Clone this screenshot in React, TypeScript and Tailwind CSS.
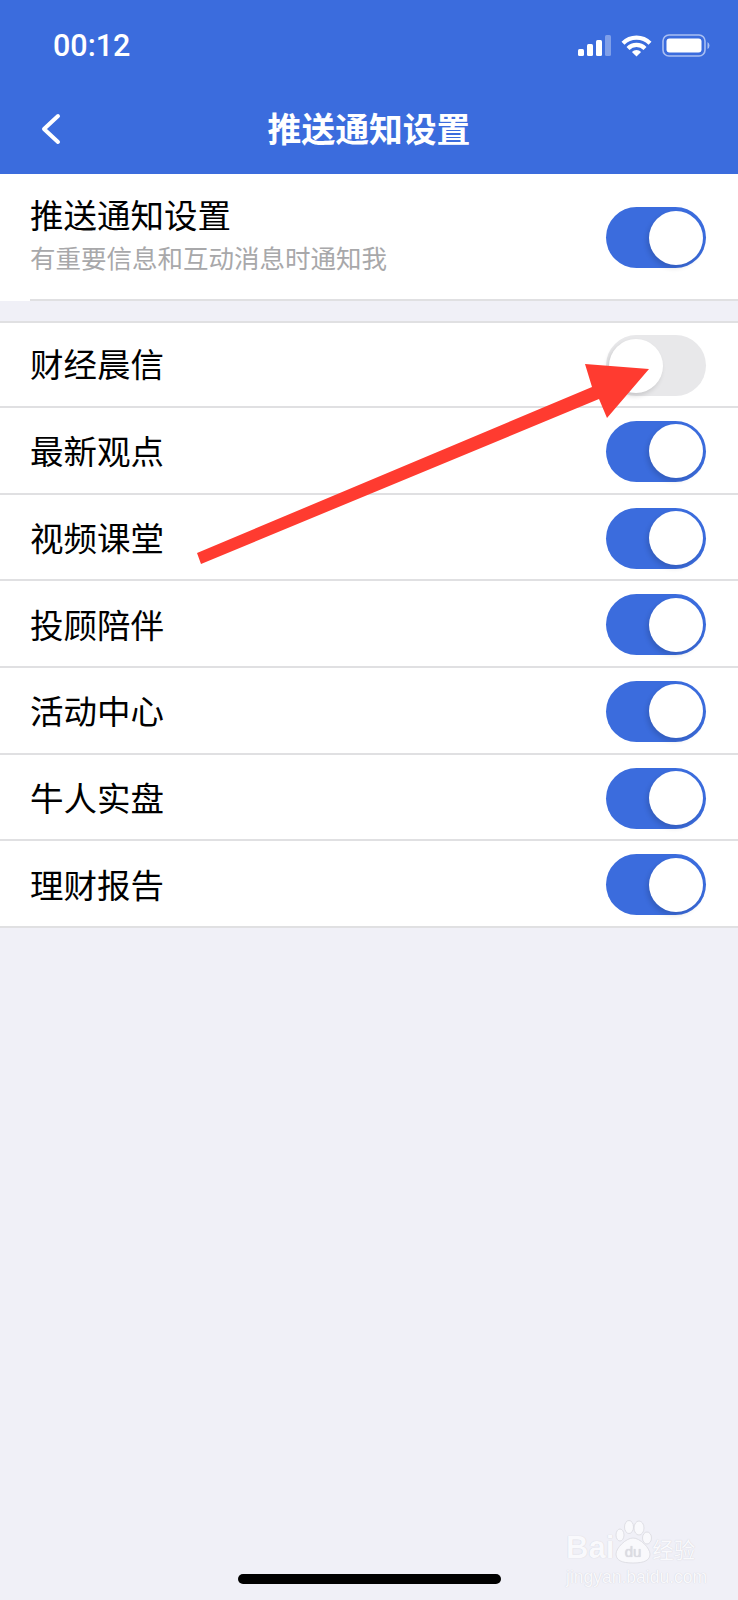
const cjk = "font-['Noto_Sans_CJK_SC','Noto_Sans',sans-serif]";

const rows = [
  { label: "财经晨信", on: false },
  { label: "最新观点", on: true },
  { label: "视频课堂", on: true },
  { label: "投顾陪伴", on: true },
  { label: "活动中心", on: true },
  { label: "牛人实盘", on: true },
  { label: "理财报告", on: true },
];

function Toggle({ on }: { on: boolean }) {
  return (
    <div
      className={`flex h-[61px] w-[100px] shrink-0 items-center rounded-full px-[3px] ${
        on ? "justify-end bg-[#3b6cdd]" : "justify-start bg-[#e8e8ea]"
      }`}
    >
      <div className="h-[54px] w-[54px] rounded-full bg-white shadow-[-2px_3px_5px_rgba(0,0,0,0.14)]" />
    </div>
  );
}

function StatusIcons() {
  return (
    <div className="flex items-center">
      <svg width="36" height="22" viewBox="0 0 36 22" fill="#fff">
        <rect x="2" y="14" width="6" height="7" rx="1.5" />
        <rect x="11" y="9" width="6" height="12" rx="1.5" />
        <rect x="20" y="5" width="6" height="16" rx="1.5" />
        <rect x="29" y="0" width="6" height="21" rx="1.5" fill="#7f9fe9" />
      </svg>
      <svg className="ml-[9px]" width="31" height="22" viewBox="0 0 31 22" fill="none" stroke="#fff" strokeWidth="4.2">
        <path d="M2 8.2a19 19 0 0 1 27 0" />
        <path d="M7 13.4a12 12 0 0 1 17 0" />
        <path d="M15.5 21.5l-4.6-4.6a6.5 6.5 0 0 1 9.2 0z" fill="#fff" stroke="none" />
      </svg>
      <svg className="ml-[10px]" width="48" height="23" viewBox="0 0 48 23" fill="none">
        <rect x="1" y="1" width="42" height="21" rx="6" stroke="#a9bff2" strokeWidth="1.6" />
        <rect x="4.5" y="4.5" width="35" height="14" rx="3" fill="#fff" />
        <path d="M45.5 8v7a4 4 0 0 0 2-3.5 4 4 0 0 0-2-3.5z" fill="#a9bff2" />
      </svg>
    </div>
  );
}

function Watermark() {
  return (
    <div className="absolute left-[566px] top-[1520px] w-[135px] text-[#f9f9fc] [text-shadow:0_0_1px_#c9c9d2]">
      <div className="flex h-[44px] items-end">
        <span className="font-['Liberation_Sans',sans-serif] text-[31px] font-bold leading-[32px]">Bai</span>
        <svg className="shrink-0" width="38" height="44" viewBox="0 0 38 44" fill="#f9f9fc" stroke="#d9d9e0" strokeWidth="0.8">
          <ellipse cx="6" cy="15" rx="4" ry="6" />
          <ellipse cx="15" cy="7" rx="4.5" ry="6.5" />
          <ellipse cx="25" cy="8" rx="5" ry="7" />
          <ellipse cx="33" cy="18" rx="4.5" ry="6" />
          <path d="M19 18c7 0 17 10 17 16 0 6-5 9-17 9S2 40 2 34c0-6 10-16 17-16z" />
          <text x="19" y="37" textAnchor="middle" fontSize="15" fontFamily="Liberation Sans" fill="#dcdce3" stroke="none">
            du
          </text>
        </svg>
        <span className={`${cjk} text-[21.5px] leading-[30px]`}>经验</span>
      </div>
      <div className="mt-[3px] font-['Liberation_Sans',sans-serif] text-[17.5px] leading-[20px]">jingyan.baidu.com</div>
    </div>
  );
}

export default function App() {
  return (
    <div className={`relative h-[1600px] w-[738px] overflow-hidden bg-[#f0f0f7] ${cjk}`}>
      <header className="h-[174px] bg-[#3b6cdd] text-white">
        <div className="flex h-[92px] items-start justify-between pl-[53px] pr-[28px] pt-[34px]">
          <span className="font-['Roboto',sans-serif] text-[30.5px] font-medium leading-[24px]">00:12</span>
          <StatusIcons />
        </div>
        <div className="relative flex h-[76px] items-center justify-center pb-[4px]">
          <svg className="absolute left-[40px] top-[21px]" width="22" height="32" viewBox="0 0 22 32" fill="none" stroke="#fff" strokeWidth="4" strokeLinecap="round" strokeLinejoin="round">
            <path d="M18 3 4 16l14 13" />
          </svg>
          <h1 className="text-[33.8px] font-bold leading-[40px]">推送通知设置</h1>
        </div>
      </header>

      <section className="h-[127px] bg-white pl-[30px]">
        <div className="flex h-full items-start justify-between border-b-2 border-[#e0e0e2] pr-[32px]">
          <div className="pt-[18px]">
            <div className="text-[33.5px] leading-[44px] text-black">推送通知设置</div>
            <div className="mt-[4px] text-[25.5px] leading-[34px] text-[#a8a8aa]">有重要信息和互动消息时通知我</div>
          </div>
          <div className="pt-[33px]">
            <Toggle on />
          </div>
        </div>
      </section>

      <section className="mt-[20px] border-t-2 border-[#e0e0e2] bg-white">
        {rows.map((row, i) => (
          <div
            key={row.label}
            className="flex h-[86.7px] items-center justify-between border-b-2 border-[#e0e0e2] pl-[30px] pr-[32px] first:h-[85px]"
          >
            <span className={`text-[33.5px] leading-[44px] text-black ${i === 0 ? "-mt-[4px]" : ""}`}>{row.label}</span>
            <div className="mt-[2px]">
              <Toggle on={row.on} />
            </div>
          </div>
        ))}
      </section>

      {/* red annotation arrow drawn over the list */}
      <svg className="absolute left-0 top-0" width="738" height="600" viewBox="0 0 738 600">
        <polygon points="197,553 592,387 585,364 649,369 607,418 599,399 201,564" fill="#ff3b30" />
      </svg>

      <Watermark />

      <div className="absolute bottom-[16px] left-[238px] h-[10px] w-[263px] rounded-full bg-black" />
    </div>
  );
}
